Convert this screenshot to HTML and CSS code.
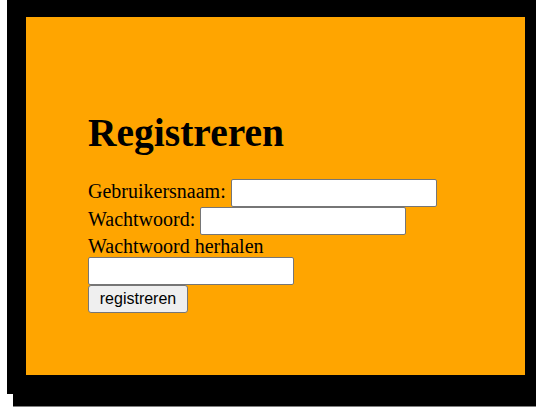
FILE: index.html
```html
<!DOCTYPE html>
<html lang="nl">
<head>
<meta charset="utf-8">
<title>Registreren</title>
<link rel="stylesheet" href="styles.css">
</head>
<body>
<div class="frame">
  <div class="card">
    <h1 class="title">Registreren</h1>
    <form class="form">
      <label class="label" for="user">Gebruikersnaam:</label> <input class="field" type="text" id="user"><br>
      <label class="label" for="pass">Wachtwoord:</label> <input class="field" type="password" id="pass"><br>
      <label class="label" for="pass2">Wachtwoord herhalen</label><br>
      <input class="field" type="password" id="pass2"><br>
      <button class="btn" type="button">registreren</button>
    </form>
  </div>
</div>
</body>
</html>
```

FILE: styles.css
```css
html, body {
  margin: 0;
  padding: 0;
  background: #fff;
}
body {
  font-family: "Liberation Serif", "Times New Roman", serif;
  min-height: 410px;
  overflow: hidden;
}
.frame {
  margin-left: 7px;
  width: 529px;
  box-sizing: border-box;
  border-style: solid;
  border-color: #000;
  border-width: 17px 11px 19px 19px;
  box-shadow: 6px 12px 0 #000, 6px 13px 0 #808080;
}
.card {
  background: #ffa500;
  padding: 93px 20px 62px 62px;
}
.title {
  margin: 0 0 23px;
  font-size: 39.5px;
  font-weight: bold;
  color: #000;
}
.form {
  margin: 0;
  font-size: 20px;
  line-height: 22px;
  color: #000;
}
.field {
  box-sizing: border-box;
  width: 206px;
  height: 28px;
  margin: 0;
  padding: 1px 2px;
  border: 1px solid #767676;
  border-radius: 2px;
  background: #fff;
  font-family: "Liberation Sans", Arial, sans-serif;
  font-size: 16px;
}
.btn {
  box-sizing: border-box;
  width: 100px;
  height: 28px;
  margin: 0;
  padding: 1px 6px;
  border: 1px solid #767676;
  border-radius: 3px;
  background: #efefef;
  color: #000;
  font-family: "Liberation Sans", Arial, sans-serif;
  font-size: 16px;
}
```
